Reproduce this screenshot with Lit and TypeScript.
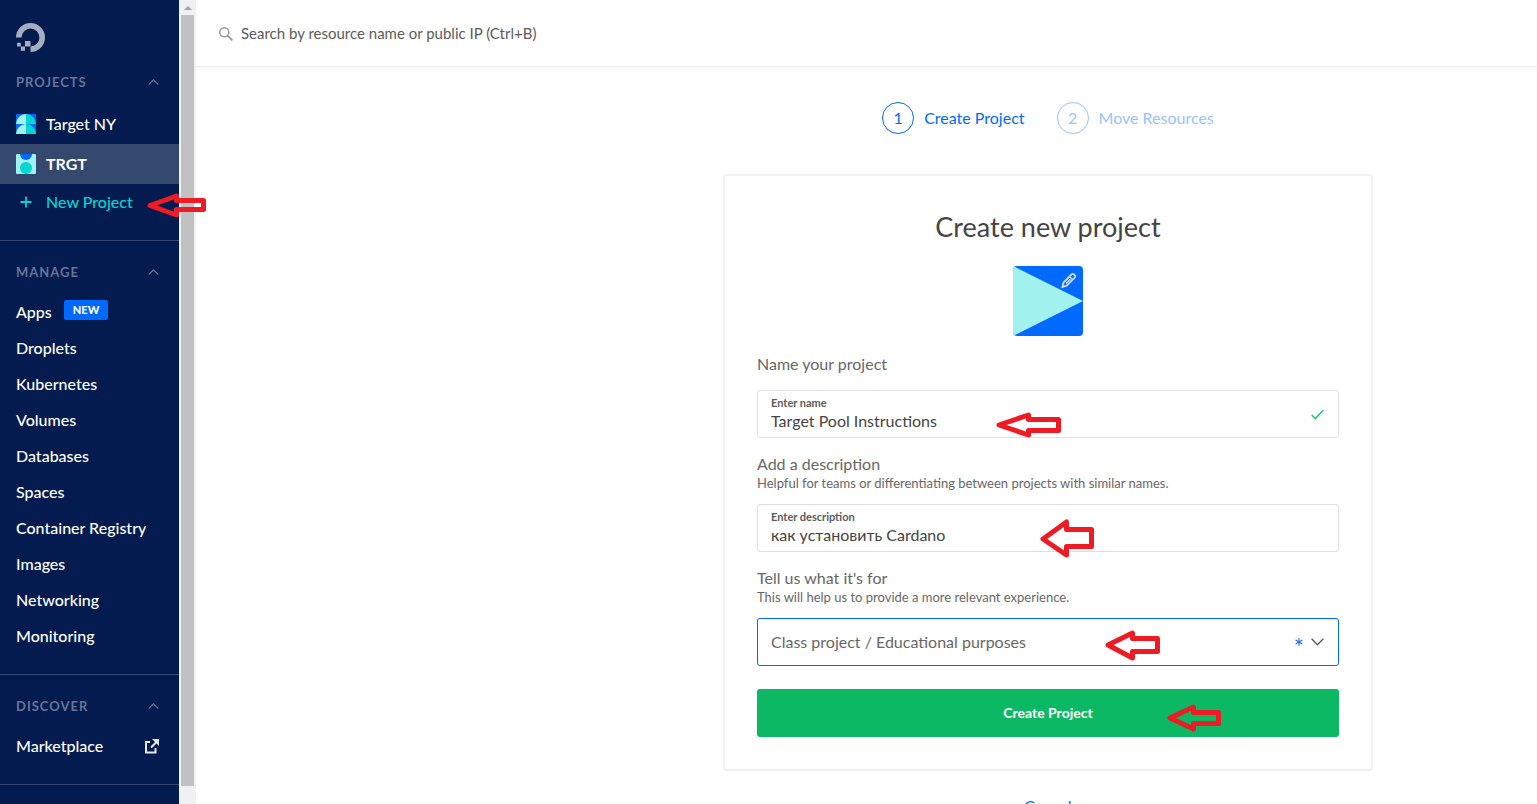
import { LitElement, html, svg, css } from "lit";
import { customElement, property } from "lit/decorators.js";

type ArrowShape = { w: number; h: number; head: number; top: number; bottom: number; tip: number };

@customElement("pointer-arrow")
class PointerArrow extends LitElement {
  @property({ attribute: false }) shape: ArrowShape = { w: 58, h: 24, head: 30, top: 5, bottom: 18, tip: 12 };

  static styles = css`
    :host { display: block; pointer-events: none; }
    .arrow { display: block; fill: none; stroke: #ed1c24; stroke-width: 5; stroke-linejoin: round; }
  `;

  render() {
    const { w, h, head, top, bottom, tip } = this.shape;
    const hx = head - 2.5;
    const points = [
      [3, tip], [hx, 3], [hx, top + 2.5], [w - 2.5, top + 2.5],
      [w - 2.5, bottom - 2.5], [hx, bottom - 2.5], [hx, h - 3],
    ].map((p) => p.join(",")).join(" ");
    return html`<svg class="arrow" width=${w} height=${h} viewBox="0 0 ${w} ${h}" aria-hidden="true">
      <polygon points=${points}></polygon>
    </svg>`;
  }
}

const chevronUp = svg`<path d="M0.7 5.6 L5.5 0.8 L10.3 5.6" fill="none" stroke="currentColor" stroke-width="1.2"/>`;

@customElement("side-nav")
class SideNav extends LitElement {
  static styles = css`
    :host { display: flex; flex: none; height: 100%; position: relative; }
    nav { width: 179px; overflow: hidden; background: #031b4e; color: #fff; box-sizing: border-box; padding-top: 23px; }
    a { color: inherit; text-decoration: none; }
    .logo { display: block; margin: 0 16px; width: 29px; height: 28px; }
    .logo svg { display: block; }
    section { padding-bottom: 20px; border-bottom: 1px solid #35496f; }
    .heading {
      display: flex; align-items: center; justify-content: space-between; width: 100%;
      padding: 23px 20px 14px 16px; border: 0; background: none; color: #65759a;
      font: 700 13px/16px Lato, "Open Sans", sans-serif; letter-spacing: 1px; text-align: left;
    }
    .heading svg { width: 11px; height: 7px; }
    ul { list-style: none; margin: 0; padding: 0; }
    .row { display: flex; align-items: center; height: 36px; padding: 0 20px 0 16px; }
    .project { height: 40px; gap: 10px; }
    .current { background: #35496f; font-weight: 700; }
    .create { gap: 10px; color: #00d7d2; }
    .glyph { width: 20px; height: 20px; flex: none; }
    .badge {
      margin: -4px 0 0 12px; padding: 0 9px; border-radius: 2px; background: #0069ff;
      font-size: 11px; line-height: 20px; font-weight: 900;
    }
    .external { margin-left: auto; }
    .scrollbar { width: 17px; box-sizing: border-box; padding: 0 2px 18px; background: #f1f1f1; display: flex; flex-direction: column; }
    .up { height: 15px; display: grid; place-items: center; }
    .thumb { flex: 1; background: #c1c1c1; }
    .mark { position: absolute; left: 147px; top: 193px; }
  `;

  private heading(label: string) {
    return html`<button class="heading" aria-expanded="true">${label}<svg viewBox="0 0 11 7" aria-hidden="true">${chevronUp}</svg></button>`;
  }

  render() {
    const items = ["Droplets", "Kubernetes", "Volumes", "Databases", "Spaces", "Container Registry", "Images", "Networking", "Monitoring"];
    return html`
      <nav aria-label="Main">
        <a class="logo" href="#" aria-label="Home">
          <svg width="29" height="29" viewBox="0 0 29 29" fill="#a7adc0">
            <path d="M14.5 29v-5.6a8.9 8.9 0 1 0-8.9-8.9H0A14.5 14.5 0 1 1 14.5 29z"/>
            <path d="M9 18h5.5v5.5H9zM4.8 23.5H9v4.200H4.800zM1 19.700h3.800v3.800H1z"/>
          </svg>
        </a>
        <section>
          ${this.heading("PROJECTS")}
          <ul>
            <li><a class="row project" href="#">
              <svg class="glyph" viewBox="0 0 20 20" aria-hidden="true">
                <rect width="20" height="20" rx="1" fill="#0069ff"/>
                <path d="M10 0A10 10 0 0 0 0 10h10z" fill="#a1f2ee"/><path d="M10 0a10 10 0 0 1 10 10H10z" fill="#00d7d2"/>
                <path d="M10 10A10 10 0 0 0 0 20h10z" fill="#a1f2ee"/><path d="M10 10a10 10 0 0 1 10 10H10z" fill="#00d7d2"/>
              </svg>Target NY</a></li>
            <li><a class="row project current" href="#" aria-current="page">
              <svg class="glyph" viewBox="0 0 20 20" aria-hidden="true">
                <rect width="20" height="20" rx="1" fill="#a1f2ee"/>
                <path d="M4 0a6 6 0 0 0 12 0z" fill="#0069ff"/><circle cx="10" cy="14" r="6" fill="#00d7d2"/>
              </svg>TRGT</a></li>
            <li><a class="row create" href="#">
              <svg class="glyph" viewBox="0 0 20 20" aria-hidden="true"><path d="M4.500 10h11M10 4.500v11" stroke="#00d7d2" stroke-width="1.800"/></svg>New Project</a></li>
          </ul>
        </section>
        <section>
          ${this.heading("MANAGE")}
          <ul>
            <li><a class="row" href="#">Apps<span class="badge">NEW</span></a></li>
            ${items.map((item) => html`<li><a class="row" href="#">${item}</a></li>`)}
          </ul>
        </section>
        <section>
          ${this.heading("DISCOVER")}
          <ul>
            <li><a class="row" href="#">Marketplace
              <svg class="external" width="15" height="15" viewBox="0 0 15 15" fill="none" stroke="#e6e9f0" stroke-width="2" aria-hidden="true">
                <path d="M6 3H2v10.500h9.500V9M7 8.500L13 2.500"/><path d="M8 0h7v7z" fill="#e6e9f0" stroke="none"/>
              </svg></a></li>
          </ul>
        </section>
      </nav>
      <div class="scrollbar" aria-hidden="true">
        <div class="up"><svg width="8" height="4" viewBox="0 0 8 4"><path d="M0 4L4 0l4 4z" fill="#a3a3a3"/></svg></div>
        <div class="thumb"></div>
      </div>
      <pointer-arrow class="mark" .shape=${{ w: 59, h: 25, head: 32, top: 5, bottom: 19, tip: 12.5 }}></pointer-arrow>
    `;
  }
}

@customElement("project-form")
class ProjectForm extends LitElement {
  static styles = css`
    :host { display: block; width: 650px; max-width: 100%; }
    .card { box-sizing: border-box; padding: 32px; border: 2px solid #f1f1f1; border-radius: 4px; background: #fff; }
    h1 { margin: 0; text-align: center; font-size: 27px; line-height: 38px; font-weight: 400; color: #444; }
    .picture { display: block; width: 70px; height: 70px; margin: 20px auto 17px; padding: 0; border: 0; border-radius: 4px; overflow: hidden; background: #0069ff; }
    .picture svg { display: block; }
    .question { display: block; line-height: 22px; color: #676767; }
    .hint { margin: 0; font-size: 13px; line-height: 16px; color: #676767; }
    .question + .field { margin-top: 15px; }
    .hint + .field { margin-top: 13px; }
    .field { position: relative; box-sizing: border-box; height: 48px; margin-bottom: 15px; padding-bottom: 3px; border: 1px solid #dfdfdf; border-radius: 3px; display: flex; flex-direction: column; justify-content: center; }
    .caption { padding: 0 13px; font-size: 11px; line-height: 16px; font-weight: 700; color: #5b5b5b; }
    input { margin: 0; padding: 0 40px 0 13px; border: 0; outline: 0; background: none; font: inherit; line-height: 20px; height: 20px; color: #444; }
    .tick { position: absolute; right: 14px; top: 18px; }
    .chosen { padding-bottom: 0; border-color: #0069ff; margin-bottom: 23px; }
    select { appearance: none; width: 100%; height: 100%; padding: 0 60px 0 13px; border: 0; outline: 0; background: none; font: inherit; color: #676767; }
    .marks { position: absolute; right: 14px; top: 0; height: 100%; display: flex; align-items: center; gap: 8px; color: #0069ff; pointer-events: none; }
    .submit { position: relative; display: block; width: 100%; height: 48px; padding: 0; border: 0; border-radius: 3px; background: #0cb863; color: #fff; font: inherit; font-size: 14px; font-weight: 700; }
    .arrow-name { position: absolute; left: 238px; top: 21px; }
    .arrow-description { position: absolute; left: 282px; top: 14px; }
    .arrow-purpose { position: absolute; left: 347px; top: 11px; }
    .arrow-submit { position: absolute; left: 410px; top: 15px; }
    .cancel { display: block; margin: 24px 0; text-align: center; line-height: 22px; color: #0069ff; text-decoration: none; }
  `;

  render() {
    return html`
      <form class="card">
        <h1>Create new project</h1>
        <button class="picture" type="button" aria-label="Edit picture">
          <svg width="70" height="70" viewBox="0 0 70 70">
            <path d="M0 0L70 35 0 70z" fill="#a1f2ee"/>
            <g fill="none" stroke="#ccdcf7" stroke-width="1.800" stroke-linejoin="round">
              <path d="M49.300 21.200l1.200-4.700 8.300-8.300q1.300-.7 2.300.3l.7.700q1 1 .2 2.200l-8.300 8.300z"/>
              <path d="M56.500 10.500l3 3M53 17.500l4.500-4.500" stroke-width="1.300"/>
            </g>
          </svg>
        </button>

        <label class="question" for="name">Name your project</label>
        <div class="field">
          <label class="caption" for="name">Enter name</label>
          <input id="name" type="text" value="Target Pool Instructions" />
          <svg class="tick" width="13" height="11" viewBox="0 0 13 11" aria-hidden="true"><path d="M.7 6l3.600 3.600L12.300 1.300" fill="none" stroke="#15cd72" stroke-width="1.500"/></svg>
          <pointer-arrow class="arrow-name" .shape=${{ w: 65, h: 26, head: 35, top: 5, bottom: 21, tip: 13 }}></pointer-arrow>
        </div>

        <label class="question" for="description">Add a description</label>
        <p class="hint">Helpful for teams or differentiating between projects with similar names.</p>
        <div class="field">
          <label class="caption" for="description">Enter description</label>
          <input id="description" type="text" value="как установить Cardano" />
          <pointer-arrow class="arrow-description" .shape=${{ w: 54, h: 39, head: 29, top: 8, bottom: 30, tip: 20 }}></pointer-arrow>
        </div>

        <label class="question" for="purpose">Tell us what it's for</label>
        <p class="hint">This will help us to provide a more relevant experience.</p>
        <div class="field chosen">
          <select id="purpose"><option>Class project / Educational purposes</option></select>
          <div class="marks" aria-hidden="true">
            <svg width="8" height="8" viewBox="0 0 8 8"><path d="M4 0v8M.6 2l6.800 4M.6 6l6.800-4" stroke="#2a66f5" stroke-width="1.100"/></svg>
            <svg width="13" height="8" viewBox="0 0 13 8"><path d="M.6.8l5.900 6 5.900-6" fill="none" stroke="#5b5b5b" stroke-width="1.400"/></svg>
          </div>
          <pointer-arrow class="arrow-purpose" .shape=${{ w: 55, h: 31, head: 30, top: 6, bottom: 24, tip: 15 }}></pointer-arrow>
        </div>

        <button class="submit" type="button">Create Project
          <pointer-arrow class="arrow-submit" .shape=${{ w: 54, h: 28, head: 29, top: 6, bottom: 22, tip: 14 }}></pointer-arrow>
        </button>
      </form>
      <a class="cancel" href="#">Cancel</a>
    `;
  }
}

@customElement("app-root")
class AppRoot extends LitElement {
  static styles = css`
    :host { display: flex; height: 100vh; overflow: hidden; background: #fff; color: #444; font: 400 16px/22px Lato, "Open Sans", sans-serif; }
    side-nav { font-size: 16px; font-weight: 500; }
    .page { flex: 1; min-width: 0; display: flex; flex-direction: column; }
    header { flex: none; display: flex; align-items: center; gap: 8px; height: 66px; padding: 0 23px; border-bottom: 1px solid #efefef; box-shadow: 0 1px 4px rgba(0, 0, 0, 0.05); }
    .search { flex: 1; height: 24px; padding: 0; border: 0; outline: 0; font: inherit; font-size: 15px; color: #5b5b5b; }
    .search::placeholder { color: #5b5b5b; opacity: 1; }
    main { flex: 1; min-height: 0; overflow: hidden; padding: 35px 0 0 363px; display: flex; flex-direction: column; align-items: center; }
    .steps { display: flex; gap: 32px; margin: 0 0 40px; padding: 0; list-style: none; color: #0069ff; }
    .step { display: flex; align-items: center; gap: 10px; }
    .later { color: #99c3ff; }
    .number { box-sizing: border-box; width: 32px; height: 32px; border: 1px solid currentColor; border-radius: 50%; display: grid; place-items: center; }
  `;

  render() {
    return html`
      <side-nav></side-nav>
      <div class="page">
        <header>
          <svg width="14" height="16" viewBox="0 -2 14 16" fill="none" stroke="#999" aria-hidden="true"><circle cx="5.300" cy="5.300" r="4.500" stroke-width="1.500"/><path d="M8.600 8.600l4.800 4.800" stroke-width="1.900"/></svg>
          <input class="search" type="search" aria-label="Search" placeholder="Search by resource name or public IP (Ctrl+B)" />
        </header>
        <main>
          <ol class="steps">
            <li class="step"><span class="number">1</span>Create Project</li>
            <li class="step later"><span class="number">2</span>Move Resources</li>
          </ol>
          <project-form></project-form>
        </main>
      </div>
    `;
  }
}
